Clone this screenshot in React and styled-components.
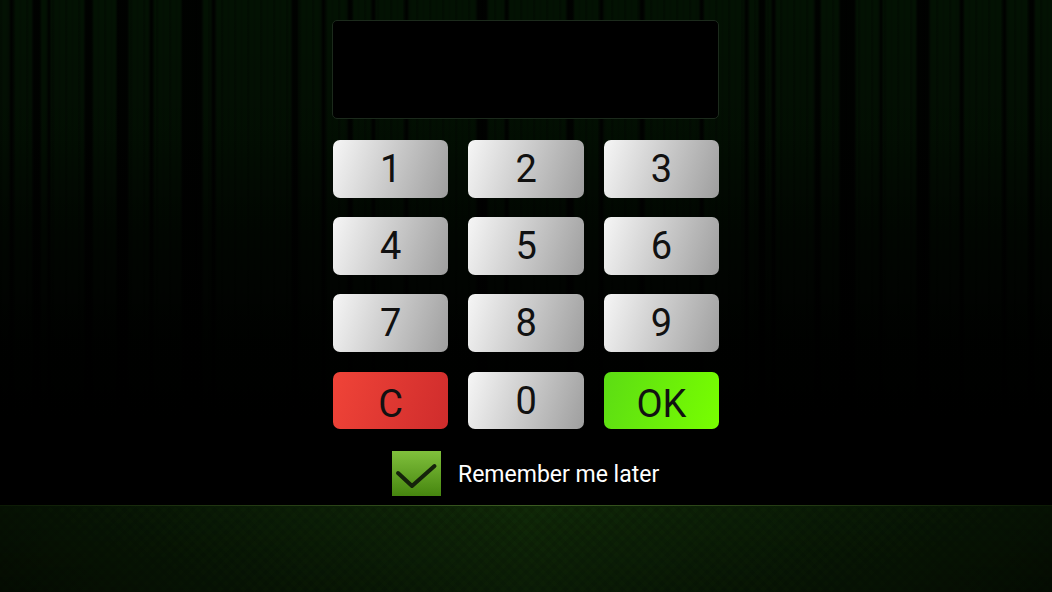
import React from "react";
import styled, { createGlobalStyle } from "styled-components";

const GlobalStyle = createGlobalStyle`
  html, body {
    margin: 0;
    padding: 0;
    height: 100%;
    background: #000;
    font-family: Roboto, "Liberation Sans", sans-serif;
  }
  #root {
    height: 100%;
  }
`;

// dark gaps in the curtain, [from, to] in px
const gaps = [
  [10, 13], [33, 40], [48, 50], [85, 92], [117, 128], [150, 153], [182, 202], [212, 215],
  [292, 298], [322, 325], [348, 352], [372, 375], [405, 408], [477, 487], [505, 508],
  [567, 573], [600, 603], [640, 644], [700, 703], [745, 748], [759, 765], [772, 775],
  [815, 820], [840, 855], [880, 882], [917, 929], [960, 963], [1003, 1006], [1029, 1034],
];

const curtain = () => {
  const shade = "rgba(0, 0, 0, 0.9)";
  const stops = gaps.map(
    ([a, b]) =>
      `transparent ${a - 2}px, ${shade} ${a + 1}px, ${shade} ${b - 1}px, transparent ${b + 2}px`
  );
  return `linear-gradient(90deg, transparent 0, ${stops.join(", ")}, transparent 100%)`;
};

const Screen = styled.div`
  width: 1052px;
  height: 592px;
  display: flex;
  flex-direction: column;
  overflow: hidden;
  background: #000;
`;

const Wall = styled.main`
  height: 505px;
  display: flex;
  justify-content: center;
  box-sizing: border-box;
  padding: 20px 1px 0 0;
  background:
    linear-gradient(180deg, rgba(0, 0, 0, 0) 0, rgba(0, 0, 0, 0.2) 130px, rgba(0, 0, 0, 0.65) 230px, rgba(0, 0, 0, 0.92) 340px, #000 420px),
    ${curtain()},
    repeating-linear-gradient(90deg, rgba(0, 0, 0, 0.22) 0, rgba(0, 0, 0, 0.22) 2px, transparent 3px, transparent 6px, rgba(0, 0, 0, 0.12) 7px, rgba(0, 0, 0, 0.12) 8px, transparent 9px, transparent 13px),
    #031203;
`;

const Panel = styled.div`
  width: 387px;
  display: flex;
  flex-direction: column;
`;

const Display = styled.div`
  height: 99px;
  box-sizing: border-box;
  background: #000;
  border: 1px solid #1c2a1c;
  border-radius: 5px;
`;

const Keypad = styled.div`
  margin-top: 21px;
  padding-left: 1px;
  display: grid;
  grid-template-columns: repeat(3, 115.4px);
  grid-auto-rows: 57.6px;
  column-gap: 20px;
  row-gap: 19.6px;
`;

const keyColors = {
  plain: "#f6f6f6, #9e9e9e",
  clear: "#f04438, #cf2c2c",
  ok: "#5cdc14, #78ff00",
};

const Key = styled.button`
  border: 0;
  padding: 0;
  border-radius: 7px;
  background: linear-gradient(108deg, ${(p) => keyColors[p.$tone]});
  color: #111;
  font-family: Roboto, "Liberation Sans", sans-serif;
  font-size: 38px;
  line-height: 58px;
  text-align: center;
`;

const KeyText = styled.span`
  display: block;
  transform: translateY(${(p) => (p.$tone === "plain" ? 0 : 3)}px);
`;

const Remember = styled.label`
  margin-top: 22px;
  margin-left: 60px;
  display: flex;
  align-items: center;
  gap: 17px;
  color: #fff;
  font-size: 23px;
`;

const RememberText = styled.span`
  padding-top: 1px;
`;

const Check = styled.span`
  width: 49px;
  height: 45px;
  display: block;
  background: linear-gradient(180deg, #80c03c 0, #46860f 100%);

  svg {
    display: block;
  }
`;

const Floor = styled.footer`
  flex: 1;
  border-top: 1px solid transparent;
  border-image: linear-gradient(90deg, #0c1a05 0, #3c5c22 50%, #0c1a05 100%) 1;
  background:
    repeating-linear-gradient(45deg, rgba(0, 0, 0, 0.08) 0 4px, transparent 4px 8px),
    repeating-linear-gradient(-45deg, rgba(0, 0, 0, 0.08) 0 4px, transparent 4px 8px),
    linear-gradient(180deg, rgba(0, 0, 0, 0) 0, rgba(0, 0, 0, 0.3) 100%),
    linear-gradient(90deg, #061203 0, #102a08 50%, #061203 100%);
`;

const rows = [
  [["1", "plain"], ["2", "plain"], ["3", "plain"]],
  [["4", "plain"], ["5", "plain"], ["6", "plain"]],
  [["7", "plain"], ["8", "plain"], ["9", "plain"]],
  [["C", "clear"], ["0", "plain"], ["OK", "ok"]],
];

export default function App() {
  return (
    <Screen>
      <GlobalStyle />
      <Wall>
        <Panel>
          <Display />
          <Keypad>
            {rows.flat().map(([label, tone]) => (
              <Key key={label} $tone={tone}>
                <KeyText $tone={tone}>{label}</KeyText>
              </Key>
            ))}
          </Keypad>
          <Remember>
            <Check>
              <svg width="49" height="45" viewBox="0 0 49 45" fill="none">
                <path
                  d="M6 22 L20 35 L42.5 15"
                  stroke="#15220b"
                  strokeWidth="4"
                  strokeLinecap="round"
                  strokeLinejoin="round"
                />
              </svg>
            </Check>
            <RememberText>Remember me later</RememberText>
          </Remember>
        </Panel>
      </Wall>
      <Floor />
    </Screen>
  );
}
